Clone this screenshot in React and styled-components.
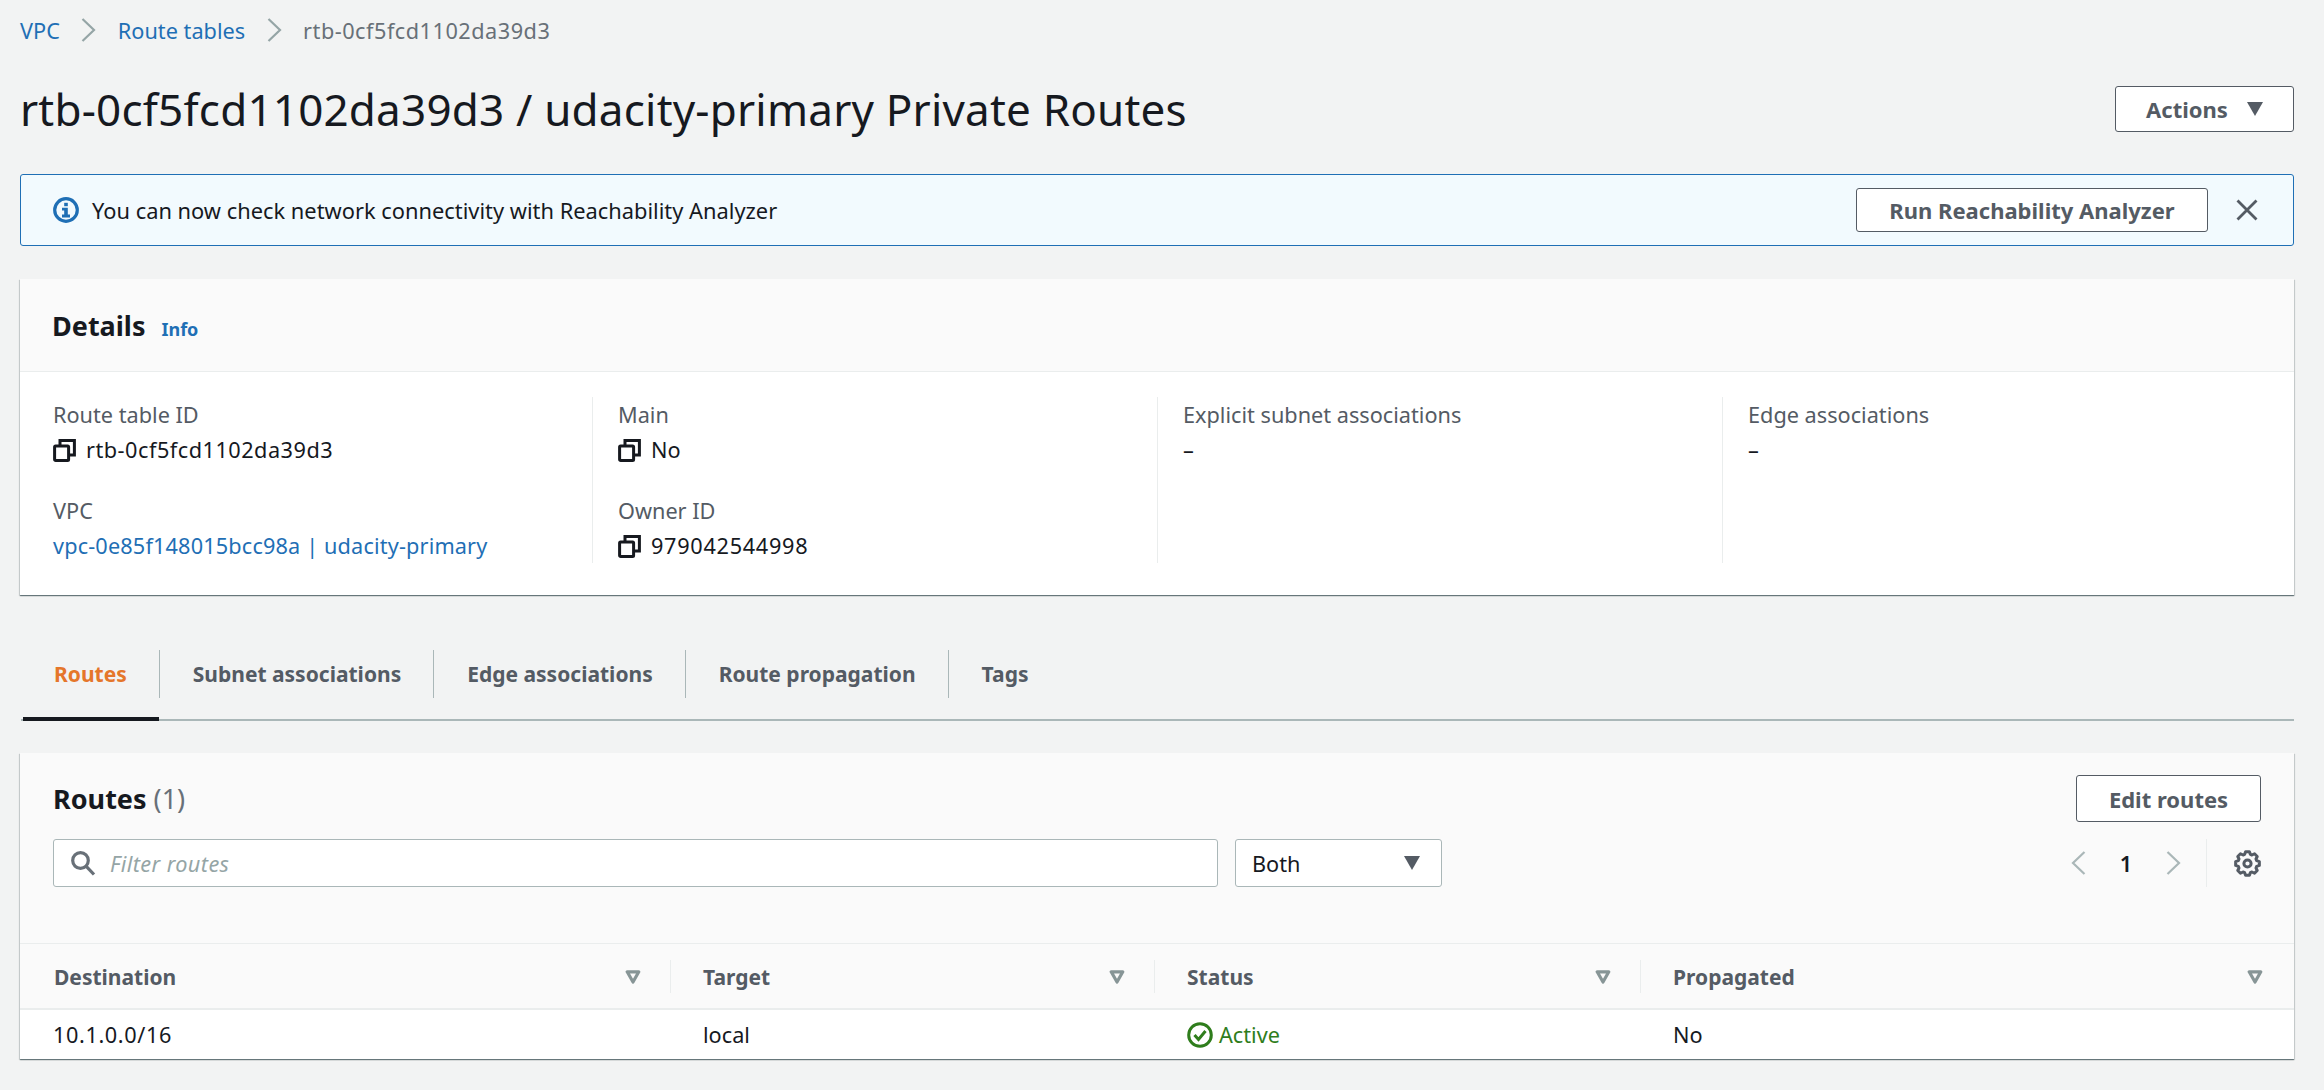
import React from 'react';
import styled, { createGlobalStyle } from 'styled-components';

const GlobalStyle = createGlobalStyle`
  html, body {
    margin: 0;
    padding: 0;
    background: #f2f3f3;
    font-family: "Noto Sans", "Open Sans", sans-serif;
    color: #16191f;
  }
`;

const LINK = '#1f6fb5';
const GREEN = '#2f7d1c';

const Page = styled.div`
  width: 2324px;
  height: 1090px;
  box-sizing: border-box;
  padding: 0 30px 0 20px;
  overflow: hidden;
  font-size: 21.7px;
`;

const Breadcrumbs = styled.nav`
  display: flex;
  align-items: center;
  height: 60px;
`;

const Crumb = styled.span`
  color: ${(p) => (p.$current ? '#687078' : LINK)};
  letter-spacing: ${(p) => (p.$current ? '0.5px' : '0')};
`;

const CrumbSep = styled.svg`
  width: 15px;
  height: 24px;
  margin: 0 21.5px;
  fill: none;
  stroke: #95a5a6;
  stroke-width: 2.2;
`;

const TitleRow = styled.div`
  display: flex;
  align-items: center;
  justify-content: space-between;
  height: 46px;
  margin-top: 26px;
`;

const Title = styled.h1`
  margin: 0;
  font-size: 44px;
  font-weight: 400;
  line-height: 46px;
  letter-spacing: 0.2px;
`;

const Button = styled.button`
  display: flex;
  align-items: center;
  justify-content: center;
  gap: 19px;
  box-sizing: border-box;
  width: ${(p) => p.$width}px;
  height: ${(p) => p.$height}px;
  padding: 0;
  background: #fff;
  border: 1.5px solid #545b64;
  border-radius: 3px;
  color: #545b64;
  font-family: inherit;
  font-size: 22px;
  font-weight: 700;
`;

const Caret = styled.svg`
  width: 16px;
  height: 14px;
  fill: #545b64;
`;

const Alert = styled.div`
  display: flex;
  align-items: center;
  box-sizing: border-box;
  height: 72px;
  margin-top: 42px;
  padding: 0 35px 0 32px;
  background: #f2fafe;
  border: 1.5px solid ${LINK};
  border-radius: 3px;
`;

const AlertText = styled.span`
  flex: 1;
  margin-left: 13px;
  font-size: 21.85px;
`;

const CloseIcon = styled.svg`
  width: 22px;
  height: 22px;
  margin-left: 28px;
  fill: none;
  stroke: #545b64;
  stroke-width: 2.8;
`;

const Card = styled.section`
  background: #fff;
  box-shadow: 0 1px 1px 0 rgba(0, 28, 36, 0.45), 1px 1px 1px 0 rgba(0, 28, 36, 0.12),
    -1px 1px 1px 0 rgba(0, 28, 36, 0.12);
`;

const DetailsCard = styled(Card)`
  height: 316px;
  margin-top: 33px;
`;

const DetailsHeader = styled.header`
  display: flex;
  align-items: baseline;
  box-sizing: border-box;
  height: 93px;
  padding: 29px 32px 0;
  background: #fafafa;
  border-bottom: 1px solid #eaeded;
`;

const CardTitle = styled.h2`
  margin: 0;
  font-size: 27px;
  font-weight: 700;
  line-height: 36px;
`;

const Count = styled.span`
  margin-left: 7px;
  color: #687078;
  font-weight: 400;
`;

const InfoLink = styled.a`
  margin-left: 16px;
  color: ${LINK};
  font-size: 18px;
  font-weight: 700;
`;

const DetailsGrid = styled.div`
  display: grid;
  grid-template-columns: repeat(4, 565px);
  margin: 25px 0 0 7px;
`;

const DetailsColumn = styled.div`
  display: flex;
  flex-direction: column;
  gap: 31px;
  box-sizing: border-box;
  height: 166px;
  padding: 3px 0 0 25px;
  border-left: ${(p) => (p.$first ? '1px solid transparent' : '1px solid #eaeded')};
`;

const Field = styled.div`
  display: flex;
  flex-direction: column;
  gap: 5px;
`;

const FieldLabel = styled.div`
  color: #545b64;
  line-height: 30px;
`;

const FieldValue = styled.div`
  display: flex;
  align-items: center;
  gap: 10px;
  line-height: 30px;
  letter-spacing: ${(p) => p.$spread || 0}px;
`;

const ValueLink = styled.a`
  color: ${LINK};
`;

const CopyIcon = styled.svg`
  width: 23px;
  height: 23px;
  fill: none;
  stroke: #16191f;
  stroke-width: 3;
`;

const TabBar = styled.div`
  display: flex;
  box-sizing: border-box;
  height: 71px;
  margin: 55px 0 0 1px;
  border-bottom: 2px solid #aab7b8;
`;

const Tab = styled.div`
  position: relative;
  display: flex;
  align-items: center;
  box-sizing: border-box;
  height: 48px;
  padding: 0 32px 0 33px;
  border-right: ${(p) => (p.$last ? 'none' : '1px solid #aab7b8')};
  color: ${(p) => (p.$active ? '#e5762a' : '#545b64')};
  font-size: 21px;
  font-weight: 700;

  &::after {
    content: '';
    display: ${(p) => (p.$active ? 'block' : 'none')};
    position: absolute;
    left: 2px;
    right: 0;
    top: 67px;
    height: 4px;
    background: #16191f;
  }
`;

const RoutesCard = styled(Card)`
  height: 306px;
  margin-top: 32px;
  background: #fafafa;
`;

const RoutesTop = styled.div`
  box-sizing: border-box;
  height: 190px;
  padding: 22px 33px 0;
`;

const RoutesHead = styled.div`
  display: flex;
  align-items: center;
  justify-content: space-between;
  height: 47px;
`;

const FilterRow = styled.div`
  display: flex;
  align-items: center;
  height: 48px;
  margin-top: 17px;
`;

const FilterBox = styled.div`
  display: flex;
  align-items: center;
  box-sizing: border-box;
  width: 1165px;
  height: 48px;
  padding-left: 17px;
  background: #fff;
  border: 1.5px solid #aab7b8;
  border-radius: 3px;
`;

const SearchIcon = styled.svg`
  width: 25px;
  height: 25px;
  fill: none;
  stroke: #687078;
  stroke-width: 3.2;
`;

const Placeholder = styled.span`
  margin-left: 14px;
  color: #95a5a6;
  font-style: italic;
  letter-spacing: 0.4px;
`;

const SelectBox = styled.div`
  display: flex;
  align-items: center;
  justify-content: space-between;
  box-sizing: border-box;
  width: 207px;
  height: 48px;
  margin-left: 17px;
  padding: 0 21px 0 16px;
  background: #fff;
  border: 1.5px solid #aab7b8;
  border-radius: 3px;
`;

const Pager = styled.div`
  display: flex;
  align-items: center;
  height: 48px;
  margin-left: auto;
`;

const PagerChevron = styled.svg`
  width: 15px;
  height: 24px;
  fill: none;
  stroke: #aab7b8;
  stroke-width: 2.2;
`;

const PageNumber = styled.span`
  width: 80px;
  text-align: center;
  font-weight: 600;
`;

const PagerSep = styled.div`
  height: 48px;
  margin: 0 27px 0 25px;
  border-left: 1px solid #eaeded;
`;

const GearIcon = styled.svg`
  width: 27px;
  height: 27px;
  fill: none;
  stroke: #545b64;
  stroke-width: 3;
  stroke-linejoin: round;
`;

const TableRow = styled.div`
  display: grid;
  grid-template-columns: 651px 484px 486px 653px;
  align-items: center;
  box-sizing: border-box;
`;

const HeadRow = styled(TableRow)`
  height: 67px;
  padding-top: 1px;
  border-top: 1px solid #eaeded;
  border-bottom: 2px solid #eaeded;
`;

const BodyRow = styled(TableRow)`
  height: 49px;
  background: #fff;
`;

const HeadCell = styled.div`
  display: flex;
  align-items: center;
  justify-content: space-between;
  box-sizing: border-box;
  height: 33px;
  padding: 0 ${(p) => (p.$last ? 31 : 29)}px 0 ${(p) => (p.$first ? 34 : 32)}px;
  border-right: ${(p) => (p.$last ? 'none' : '1px solid #eaeded')};
  color: #545b64;
  font-size: 21px;
  font-weight: 700;
`;

const FilterCaret = styled.svg`
  width: 16px;
  height: 14px;
  fill: none;
  stroke: #879596;
  stroke-width: 3.2;
  stroke-linejoin: round;
`;

const BodyCell = styled.div`
  display: flex;
  align-items: center;
  gap: 6px;
  padding-left: ${(p) => (p.$first ? 33 : 32)}px;
  color: ${(p) => p.$color || '#16191f'};
  letter-spacing: ${(p) => p.$spread || 0}px;
`;

const StatusIcon = styled.svg`
  width: 26px;
  height: 26px;
  fill: none;
  stroke: ${GREEN};
  stroke-width: 3;
`;

const columns = ['Destination', 'Target', 'Status', 'Propagated'];
const tabs = ['Routes', 'Subnet associations', 'Edge associations', 'Route propagation', 'Tags'];

// eight toothed cog outline, centred in a 27 box
const gearPoints = Array.from({ length: 8 }, (_, i) => {
  const a = (i * Math.PI) / 4;
  return [
    [a - 0.3, 9.6],
    [a - 0.16, 12],
    [a + 0.16, 12],
    [a + 0.3, 9.6],
  ];
})
  .flat()
  .map(([a, r]) => `${(13.5 + r * Math.sin(a)).toFixed(2)},${(13.5 - r * Math.cos(a)).toFixed(2)}`)
  .join(' ');

const Chevron = ({ as: Comp = CrumbSep, left }) => (
  <Comp viewBox="0 0 15 24">
    <path d={left ? 'M13.5 1 L2 12 L13.5 23' : 'M1.5 1 L13 12 L1.5 23'} />
  </Comp>
);

const Copy = () => (
  <CopyIcon viewBox="0 0 23 23">
    <rect x="1.6" y="7" width="14" height="14.4" rx="1" />
    <path d="M7 6.5 V1.6 H21.4 V16 H16.5" />
  </CopyIcon>
);

const DownCaret = () => (
  <Caret viewBox="0 0 16 14">
    <path d="M0 0 H16 L8 14 Z" />
  </Caret>
);

const Value = ({ children, spread }) => (
  <FieldValue $spread={spread}>
    <Copy />
    {children}
  </FieldValue>
);

const App = () => (
  <Page>
    <GlobalStyle />
    <Breadcrumbs>
      <Crumb>VPC</Crumb>
      <Chevron />
      <Crumb>Route tables</Crumb>
      <Chevron />
      <Crumb $current>rtb-0cf5fcd1102da39d3</Crumb>
    </Breadcrumbs>

    <TitleRow>
      <Title>rtb-0cf5fcd1102da39d3 / udacity-primary Private Routes</Title>
      <Button $width={179} $height={46}>
        Actions
        <DownCaret />
      </Button>
    </TitleRow>

    <Alert>
      <svg width="26" height="26" viewBox="0 0 26 26">
        <circle cx="13" cy="13" r="11.3" fill="none" stroke={LINK} strokeWidth="3.2" />
        <rect x="11.2" y="5.8" width="3.6" height="3.4" fill={LINK} />
        <path d="M9 10.8 H14.8 V17.6 H17 V20.4 H9 V17.6 H11.2 V13.4 H9 Z" fill={LINK} />
      </svg>
      <AlertText>You can now check network connectivity with Reachability Analyzer</AlertText>
      <Button $width={352} $height={44}>Run Reachability Analyzer</Button>
      <CloseIcon viewBox="0 0 22 22">
        <path d="M1.5 1.5 L20.5 20.5 M20.5 1.5 L1.5 20.5" />
      </CloseIcon>
    </Alert>

    <DetailsCard>
      <DetailsHeader>
        <CardTitle>Details</CardTitle>
        <InfoLink>Info</InfoLink>
      </DetailsHeader>
      <DetailsGrid>
        <DetailsColumn $first>
          <Field>
            <FieldLabel>Route table ID</FieldLabel>
            <Value spread={0.5}>rtb-0cf5fcd1102da39d3</Value>
          </Field>
          <Field>
            <FieldLabel>VPC</FieldLabel>
            <FieldValue $spread={0.15}>
              <ValueLink>vpc-0e85f148015bcc98a | udacity-primary</ValueLink>
            </FieldValue>
          </Field>
        </DetailsColumn>
        <DetailsColumn>
          <Field>
            <FieldLabel>Main</FieldLabel>
            <Value>No</Value>
          </Field>
          <Field>
            <FieldLabel>Owner ID</FieldLabel>
            <Value spread={0.7}>979042544998</Value>
          </Field>
        </DetailsColumn>
        <DetailsColumn>
          <Field>
            <FieldLabel>Explicit subnet associations</FieldLabel>
            <FieldValue>–</FieldValue>
          </Field>
        </DetailsColumn>
        <DetailsColumn>
          <Field>
            <FieldLabel>Edge associations</FieldLabel>
            <FieldValue>–</FieldValue>
          </Field>
        </DetailsColumn>
      </DetailsGrid>
    </DetailsCard>

    <TabBar>
      {tabs.map((t, i) => (
        <Tab key={t} $active={i === 0} $last={i === tabs.length - 1}>
          {t}
        </Tab>
      ))}
    </TabBar>

    <RoutesCard>
      <RoutesTop>
        <RoutesHead>
          <CardTitle>
            Routes<Count>(1)</Count>
          </CardTitle>
          <Button $width={185} $height={47}>Edit routes</Button>
        </RoutesHead>
        <FilterRow>
          <FilterBox>
            <SearchIcon viewBox="0 0 25 25">
              <circle cx="9.5" cy="9.5" r="7.8" />
              <path d="M14.8 14.8 L23 23.5" />
            </SearchIcon>
            <Placeholder>Filter routes</Placeholder>
          </FilterBox>
          <SelectBox>
            Both
            <DownCaret />
          </SelectBox>
          <Pager>
            <Chevron as={PagerChevron} left />
            <PageNumber>1</PageNumber>
            <Chevron as={PagerChevron} />
            <PagerSep />
            <GearIcon viewBox="0 0 27 27">
              <polygon points={gearPoints} />
              <circle cx="13.5" cy="13.5" r="3.6" />
            </GearIcon>
          </Pager>
        </FilterRow>
      </RoutesTop>
      <HeadRow>
        {columns.map((c, i) => (
          <HeadCell key={c} $first={i === 0} $last={i === columns.length - 1}>
            {c}
            <FilterCaret viewBox="0 0 16 14">
              <path d="M2.2 1.8 H13.8 L8 12 Z" />
            </FilterCaret>
          </HeadCell>
        ))}
      </HeadRow>
      <BodyRow>
        <BodyCell $first $spread={0.6}>10.1.0.0/16</BodyCell>
        <BodyCell>local</BodyCell>
        <BodyCell $color={GREEN}>
          <StatusIcon viewBox="0 0 26 26">
            <circle cx="13" cy="13" r="11.3" />
            <path d="M7.5 13 L11.5 17.5 L18.5 9" />
          </StatusIcon>
          Active
        </BodyCell>
        <BodyCell>No</BodyCell>
      </BodyRow>
    </RoutesCard>
  </Page>
);

export default App;
